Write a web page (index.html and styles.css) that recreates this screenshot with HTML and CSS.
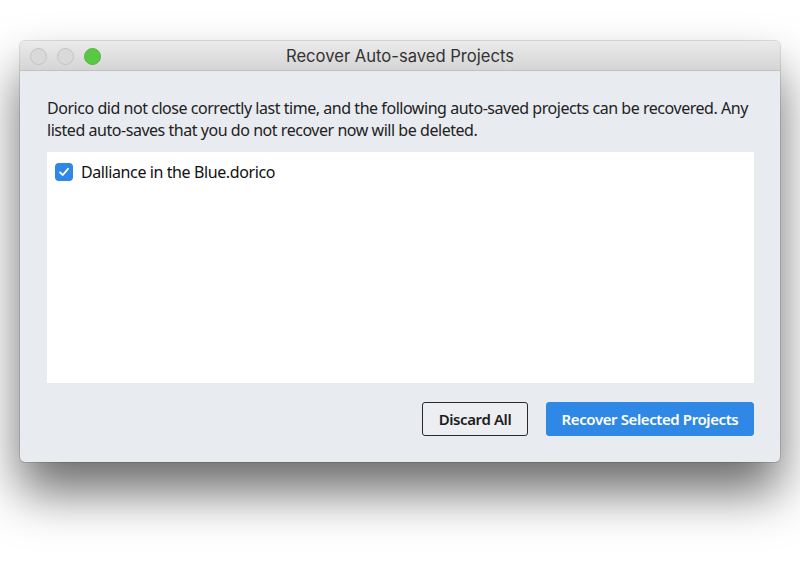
FILE: index.html
```html
<!DOCTYPE html>
<html>
<head>
<meta charset="utf-8">
<link rel="stylesheet" href="styles.css">
</head>
<body>
<div class="window">
  <div class="titlebar">
    <div class="lights">
      <span class="light"></span>
      <span class="light"></span>
      <span class="light green"></span>
    </div>
    <div class="title">Recover Auto-saved Projects</div>
  </div>
  <div class="content">
    <p class="message">Dorico did not close correctly last time, and the following auto-saved projects can be recovered. Any listed auto-saves that you do not recover now will be deleted.</p>
    <div class="list">
      <div class="item">
        <span class="check"><svg width="12" height="12" viewBox="0 0 12 12"><path d="M2 6.3 L4.8 9 L10 2.8" fill="none" stroke="#fff" stroke-width="1.8" stroke-linecap="round" stroke-linejoin="round"/></svg></span>
        <span class="item-label">Dalliance in the Blue.dorico</span>
      </div>
    </div>
    <div class="buttons">
      <button class="btn btn-secondary">Discard All</button>
      <button class="btn btn-primary">Recover Selected Projects</button>
    </div>
  </div>
</div>
</body>
</html>
```
FILE: styles.css
```css
html, body {
  margin: 0;
  padding: 0;
  background: #ffffff;
}
body {
  padding: 41px 20px 0 20px;
  height: 568px;
  box-sizing: border-box;
  overflow: hidden;
}
.window {
  width: 760px;
  background: #e8ebf0;
  border-radius: 5px;
  box-shadow: 0 30px 50px rgba(0,0,0,0.58), 0 0 0 1px rgba(0,0,0,0.12);
  overflow: hidden;
  font-family: "Source Sans Pro", "Noto Sans", sans-serif;
}
.titlebar {
  height: 28px;
  padding-top: 1px;
  background: linear-gradient(#ebebeb, #d5d5d5);
  border-bottom: 1px solid #c2c2c2;
  display: flex;
  align-items: center;
  position: relative;
}
.lights {
  display: flex;
  gap: 10px;
  padding-left: 10px;
}
.light {
  width: 15px;
  height: 15px;
  border-radius: 50%;
  background: #d9d9d9;
  border: 1px solid #c4c4c4;
}
.light.green {
  background: #5ac745;
  border-color: #4fb93c;
}
.title {
  position: absolute;
  left: 0;
  right: 0;
  text-align: center;
  font-family: "Inter", "Liberation Sans", sans-serif;
  font-size: 16.6px;
  color: #333;
}
.content {
  padding: 26px 26px 26px 27px;
}
.message {
  margin: 0;
  font-size: 16px;
  line-height: 22px;
  color: #222;
  letter-spacing: -0.46px;
}
.list {
  margin-top: 11px;
  height: 231px;
  background: #ffffff;
  padding: 9px 8px;
  box-sizing: border-box;
}
.item {
  display: flex;
  align-items: center;
  gap: 8px;
}
.check {
  width: 18px;
  height: 18px;
  border-radius: 4px;
  background: #2f88e8;
  display: flex;
  align-items: center;
  justify-content: center;
}
.item-label {
  font-size: 16px;
  color: #111;
  letter-spacing: -0.4px;
}
.buttons {
  display: flex;
  justify-content: flex-end;
  gap: 18px;
  margin-top: 19px;
}
.btn {
  height: 34px;
  border-radius: 3px;
  font-family: "Source Sans Pro", "Noto Sans", sans-serif;
  font-weight: 600;
  font-size: 15px;
  letter-spacing: -0.4px;
  padding: 0;
}
.btn-secondary {
  width: 106px;
  background: #eceef2;
  border: 1px solid #2a2a2a;
  color: #1c1c1c;
}
.btn-primary {
  width: 208px;
  background: #2f88e5;
  border: 1px solid #2f88e5;
  color: #ffffff;
}
```
